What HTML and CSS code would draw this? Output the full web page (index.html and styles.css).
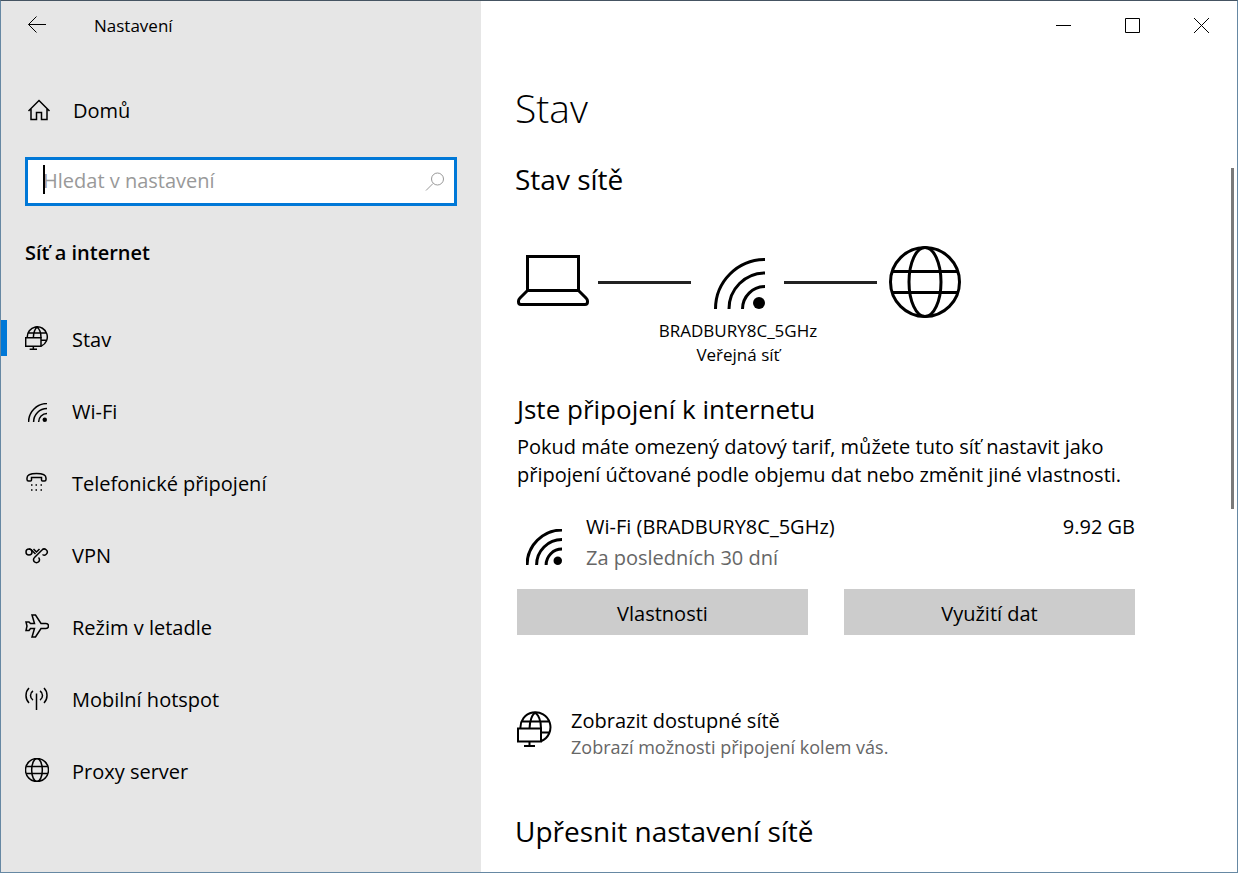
FILE: index.html
```html
<!DOCTYPE html>
<html lang="cs">

<head>
<meta charset="utf-8">
<meta name="viewport" content="width=device-width, initial-scale=1">
<title>Nastavení</title>
<link rel="stylesheet" href="styles.css">
</head>

<body>
<svg class="defs" aria-hidden="true">
	<symbol id="wifi" viewBox="0 0 51 51">
		<path d="M1.5 51A49.500 49.500 0 0 1 51 1.500M15 51A36 36 0 0 1 51 15M28.500 51A22.500 22.500 0 0 1 51 28.500" />
		<circle class="dot" cx="45" cy="45" r="6" />
	</symbol>
	<symbol id="globe" viewBox="0 0 72 72">
		<circle cx="36" cy="36" r="34.500" />
		<ellipse cx="36" cy="36" rx="16" ry="34.500" />
		<path d="M4 25.500H68M4 46.500H68" />
	</symbol>
	<symbol id="network" viewBox="0 0 36 36">
		<path d="M1 17.500H24V30.500H1zM12.500 30.500V35M7 35H18" />
		<path d="M3.500 17.500A15 15 0 1 1 24.500 30M4 10.500H32M24 21.500H32.500M12.500 17.500Q13 6 18 1.500Q24 6 24 17.500" />
	</symbol>
</svg>

<div class="window">
	<nav class="sidebar">
		<div class="titlebar">
			<button class="back" type="button" aria-label="Zpět">
				<svg width="20" height="18" viewBox="0 0 20 18"><path d="M1.500 8.500H19M9.500 .5L1.500 8.500L9.500 16.500" /></svg>
			</button>
			<span class="app-name">Nastavení</span>
		</div>
		<a class="home" href="#">
			<svg class="icon" width="24" height="24" viewBox="0 0 24 24"><path d="M1.500 12L12 1.500L22.500 12M4 10V20.500H9.500V13.500H14.500V20.500H20V10" /></svg>
			<span>Domů</span>
		</a>
		<div class="search">
			<input type="text" placeholder="Hledat v nastavení" aria-label="Hledat v nastavení">
			<span class="caret"></span>
			<svg width="20" height="20" viewBox="0 0 20 20"><circle cx="12.500" cy="7" r="6" /><path d="M8 11.500L1 18.500" /></svg>
		</div>
		<h2 class="section">Síť a internet</h2>
		<ul class="menu">
			<li><a class="active" href="#"><svg class="icon" width="24" height="24"><use href="#network" /></svg><span>Stav</span></a></li>
			<li><a href="#"><svg class="icon" width="24" height="24" viewBox="0 0 24 24"><use href="#wifi" x="3" y="5" width="19" height="19" /></svg><span>Wi-Fi</span></a></li>
			<li><a href="#"><svg class="icon" width="24" height="24" viewBox="0 0 24 24">
				<path d="M2 8C2 5.500 5 3.500 11.500 3.500S21 5.500 21 8V9.500Q21 11 19.500 11H17.500Q16.500 11 16.500 10V7.500H6.500V10Q6.500 11 5.500 11H3.500Q2 11 2 9.500z" />
				<path d="M6 15h1.500M10.500 15h1.500M15.500 15h1.500M6 20h1.500M10.500 20h1.500M15.500 20h1.500" />
			</svg><span>Telefonické připojení</span></a></li>
			<li><a href="#"><svg class="icon" width="24" height="24" viewBox="0 0 24 24">
				<circle cx="4" cy="10" r="3" />
				<path d="M4 7Q6 7 8 9.500L10.500 12M17.500 12.500A3 3 0 1 0 17 8L9.500 15.500A3 3 0 1 0 13.500 15.500M8.500 7L11.500 10L14.500 7" />
			</svg><span>VPN</span></a></li>
			<li><a href="#"><svg class="icon" width="24" height="24" viewBox="0 0 24 24">
				<path d="M7 1H10.500L16 9.500H21A2.500 2.500 0 0 1 21 14.500H16L10.500 23H7L9.500 14.500H5.500L4 16.500H1L2 12L1 8H4L5.500 9.500H9.500z" />
			</svg><span>Režim v letadle</span></a></li>
			<li><a href="#"><svg class="icon" width="24" height="24" viewBox="0 0 24 24">
				<path d="M11.500 7.500V24M4 2Q1 5 1 9.500T4 17M8 5Q5.500 6.500 5.500 9.500T8 14M19 2Q22 5 22 9.500T19 17M15 5Q17.500 6.500 17.500 9.500T15 14" />
			</svg><span>Mobilní hotspot</span></a></li>
			<li><a href="#"><svg class="icon" width="24" height="24"><use href="#globe" /></svg><span>Proxy server</span></a></li>
		</ul>
	</nav>

	<main class="content">
		<div class="controls">
			<button type="button" aria-label="Minimalizovat"><svg width="15" height="15" viewBox="0 0 15 15"><path d="M0 7.500H15" /></svg></button>
			<button type="button" aria-label="Maximalizovat"><svg width="15" height="15" viewBox="0 0 15 15"><path d="M.5 .5H14.500V14.500H.5z" /></svg></button>
			<button type="button" aria-label="Zavřít"><svg width="15" height="15" viewBox="0 0 15 15"><path d="M0 0L15 15M15 0L0 15" /></svg></button>
		</div>
		<div class="page">
			<h1>Stav</h1>
			<h2>Stav sítě</h2>
			<div class="diagram">
				<svg width="72" height="54" viewBox="0 0 72 54"><path d="M10.500 1.500H61.500V35.500H10.500zM10.500 35.500L3 43Q1.500 44.500 1.500 46V47Q1.500 49.500 4 49.500H68Q70.500 49.500 70.500 47V46Q70.500 44.500 69 43L61.500 35.500" /></svg>
				<span class="line"></span>
				<svg class="signal" width="51" height="51"><use href="#wifi" /></svg>
				<span class="line"></span>
				<svg width="72" height="72"><use href="#globe" /></svg>
			</div>
			<p class="network-name">BRADBURY8C_5GHz<br>Veřejná síť</p>
			<h3>Jste připojení k internetu</h3>
			<p class="info">Pokud máte omezený datový tarif, můžete tuto síť nastavit jako připojení účtované podle objemu dat nebo změnit jiné vlastnosti.</p>
			<div class="usage">
				<svg width="36" height="36"><use href="#wifi" /></svg>
				<div>
					<div>Wi-Fi (BRADBURY8C_5GHz)</div>
					<div class="muted">Za posledních 30 dní</div>
				</div>
				<div class="amount">9.92 GB</div>
			</div>
			<div class="buttons">
				<button type="button">Vlastnosti</button>
				<button type="button">Využití dat</button>
			</div>
			<a class="available" href="#">
				<svg width="36" height="36"><use href="#network" /></svg>
				<span>Zobrazit dostupné sítě<small>Zobrazí možnosti připojení kolem vás.</small></span>
			</a>
			<h2>Upřesnit nastavení sítě</h2>
		</div>
		<div class="scrollbar"></div>
	</main>
</div>
</body>

</html>
```
FILE: styles.css
```css
* { box-sizing: border-box; }
body { margin: 0; font-family: "Open Sans", "Noto Sans", sans-serif; font-size: 20px; line-height: 28px; color: #000; }
h1, h2, h3, p, ul { margin: 0; padding: 0; font-weight: 400; }
button, input { font: inherit; color: inherit; border: 0; border-radius: 0; padding: 0; background: none; }
a { color: inherit; text-decoration: none; }
svg { display: block; flex: none; fill: none; stroke: #000; stroke-width: 3px; }
symbol path, symbol circle, symbol ellipse { vector-effect: non-scaling-stroke; }
.dot { fill: #000; stroke: none; }
.defs { position: absolute; width: 0; height: 0; }
.icon { stroke-width: 1.5px; }

.window { display: grid; grid-template-columns: 480px 1fr; min-height: 100vh; border: 1px solid #6688a3; border-top-color: #455462; }

.sidebar { background: #e6e6e6; }
.titlebar { display: flex; align-items: center; height: 48px; padding-left: 26px; }
.back { margin-right: 47px; }
.back svg, .controls svg { stroke-width: 1px; }
.app-name { padding-top: 2px; font-size: 17px; }
.home { display: flex; align-items: center; gap: 22px; height: 48px; margin-top: 38px; padding-left: 26px; }
.search { position: relative; margin: 22px 24px 0; }
.search input { display: block; width: 100%; height: 49px; padding: 0 48px 2px 15px; border: 3px solid #0078d7; background: #fff; outline: 0; }
.search input::placeholder { color: #999; opacity: 1; }
.search svg { position: absolute; right: 12px; top: 15px; stroke: #999; stroke-width: 1px; }
.caret { position: absolute; left: 18px; top: 8px; width: 2px; height: 29px; background: #000; }
.section { margin: 33px 24px 0; font-size: 20px; font-weight: 600; }
.menu { margin-top: 35px; list-style: none; }
.menu a { position: relative; display: flex; align-items: center; gap: 23px; height: 72px; padding-left: 24px; }
.menu span { padding-top: 4px; }
.menu .active::before { content: ""; position: absolute; left: 0; top: 18px; width: 6px; height: 36px; background: #0078d7; }

.content { position: relative; }
.controls { display: flex; justify-content: flex-end; padding-right: 1px; }
.controls button { display: flex; align-items: center; justify-content: center; width: 69px; height: 48px; }
.page { max-width: 654px; padding-left: 36px; }
.page h1, .page h2 { margin-left: -2px; }
h1 { margin-top: 31px; font-size: 39px; font-weight: 300; line-height: 56px; }
.page h2 { margin-top: 23px; font-size: 28px; line-height: 40px; }
.diagram { display: flex; align-items: center; margin-top: 47px; }
.line { width: 93px; height: 3px; margin: 0 12px 0 9px; background: #222; }
.signal { margin: 2px 10px 0 11px; }
.network-name { width: 442px; margin-top: 1px; font-size: 17px; line-height: 24px; text-align: center; }
h3 { margin-top: 24px; font-size: 26px; line-height: 36px; }
.info { margin-top: 6px; }
.usage { display: grid; grid-template-columns: 36px 1fr auto; gap: 24px; margin: 22px 0 0 9px; line-height: 31px; }
.usage svg { margin-top: 18px; }
.muted { color: #666; }
.buttons { display: grid; grid-template-columns: 1fr 1fr; gap: 36px; margin-top: 16px; }
.buttons button { height: 46px; padding-top: 4px; background: #ccc; }
.available { display: flex; align-items: flex-start; gap: 18px; margin-top: 72px; line-height: 27px; }
.available svg { margin-top: 4px; stroke-width: 2px; }
.available small { display: block; font-size: 18px; color: #666; }
.page .available + h2 { margin-top: 50px; }
.scrollbar { position: absolute; right: 3px; top: 167px; width: 3px; height: 341px; background: #7a7a7a; }
```
